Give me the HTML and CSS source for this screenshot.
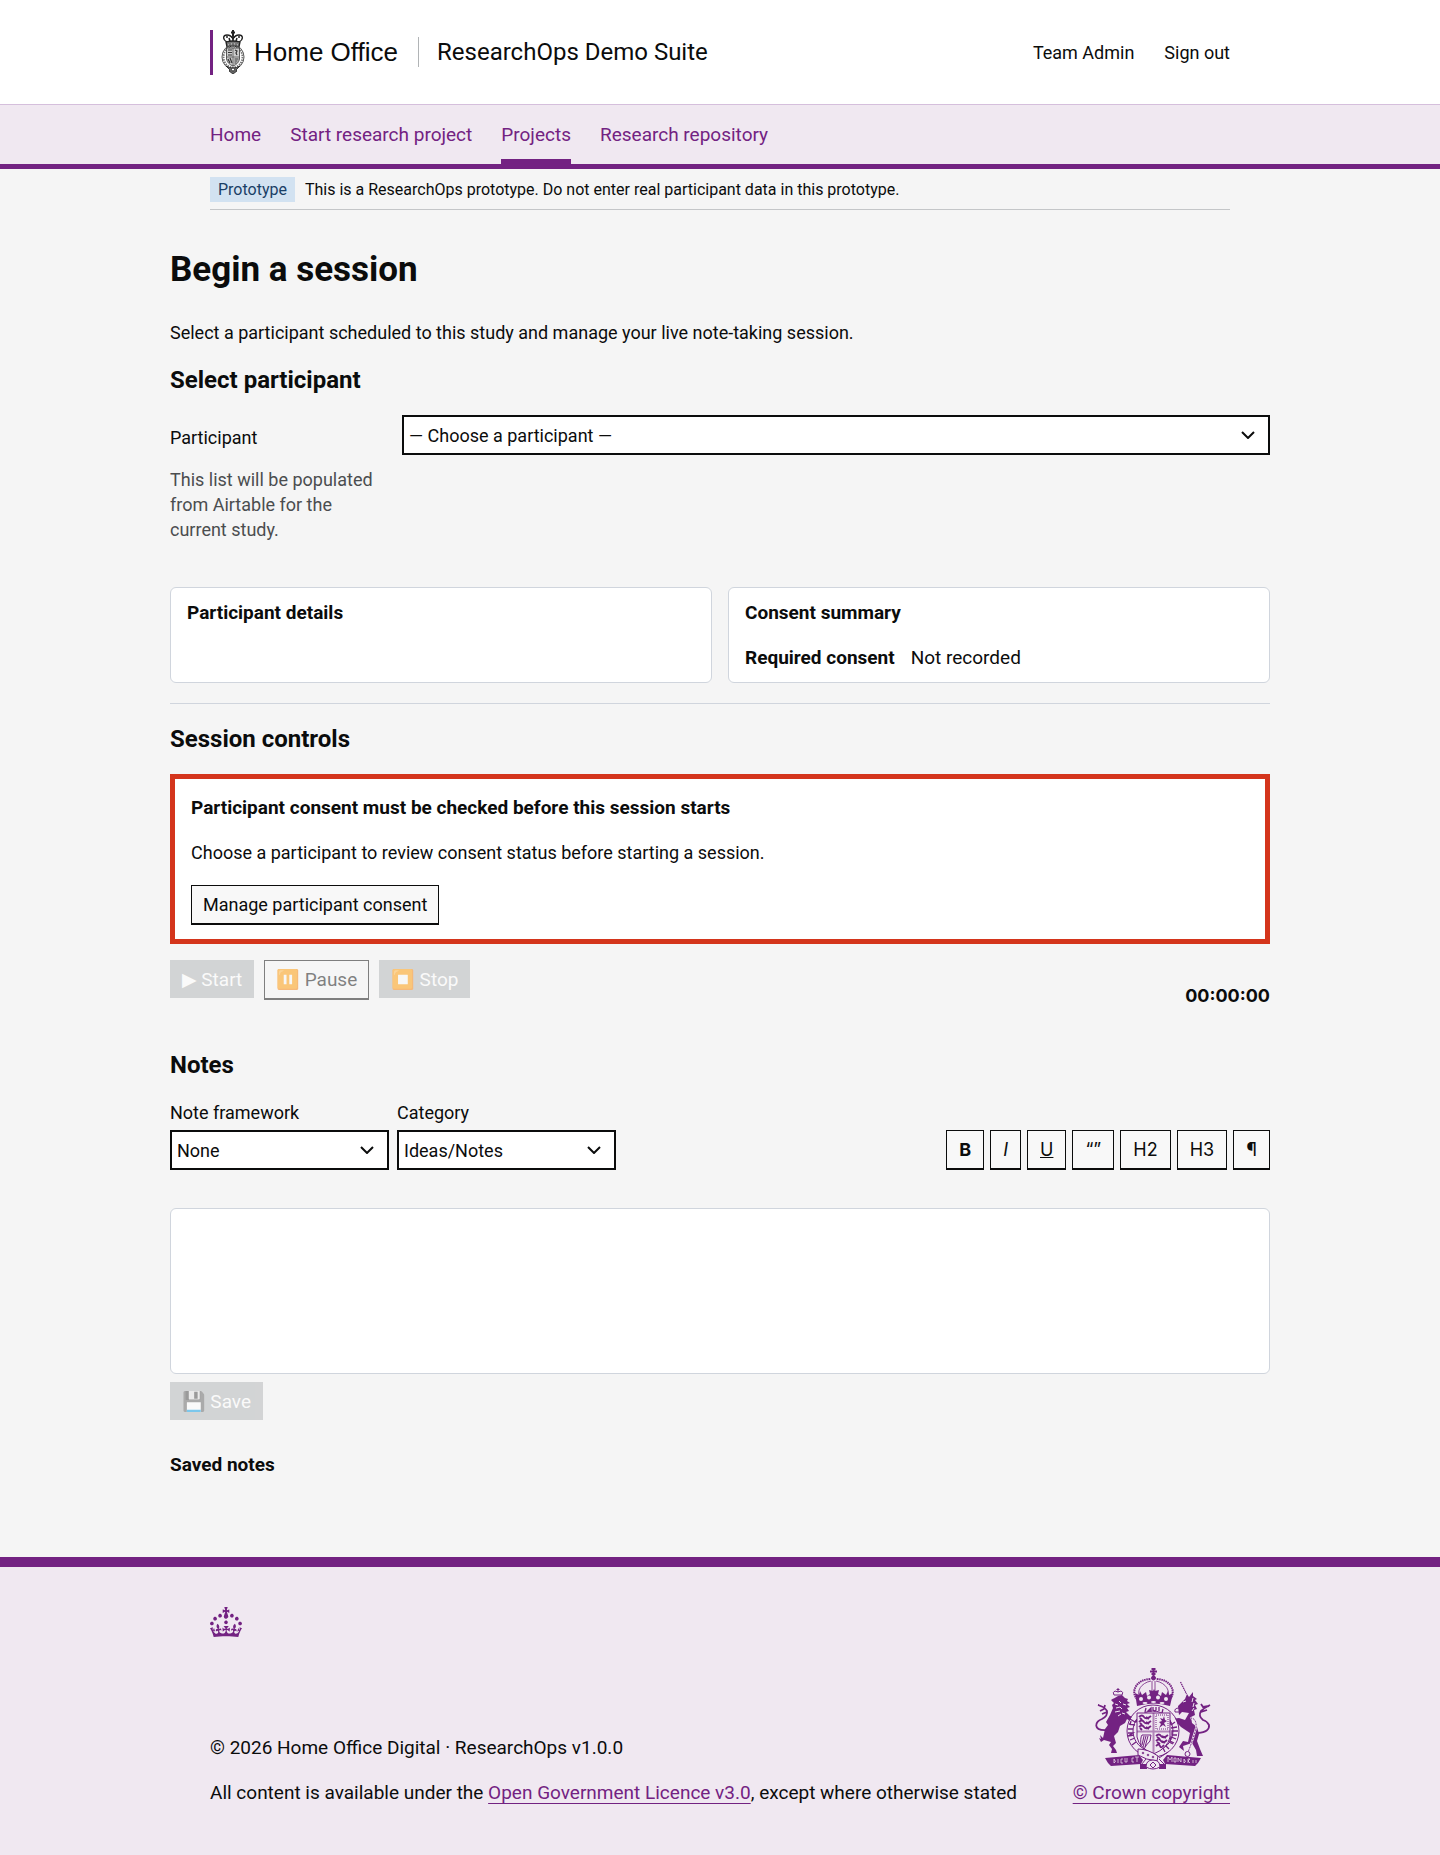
FILE: index.html
```html
<!DOCTYPE html>
<html lang="en">
<head>
<meta charset="utf-8">
<meta name="viewport" content="width=device-width, initial-scale=1">
<title>Begin a session</title>
<link rel="stylesheet" href="styles.css">
</head>
<body>
<header class="header">
  <div class="width header__row">
    <a class="brand" href="#">
      <span class="brand__bar"></span>
      <svg class="brand__crest" viewBox="0 0 24 44" aria-hidden="true" fill="none" stroke="#222" stroke-width=".8">
        <path d="M12 0v6M10 2.500h4" stroke-width="2"/>
        <path d="M6 12C1 9 2 5 6 5c3 0 5 2 6 4 1-2 3-4 6-4 4 0 5 4 0 7" stroke-width="1.300"/>
        <path d="M5 7h2M10 7h4M17 7h2M12 6v6M8 8l1 3M16 8l-1 3" stroke-width="1.500"/>
        <path d="M5 12q7-2 14 0l-1 5q-6-2-12 0z" fill="#777" stroke-width="1.300"/>
        <path d="M7 15h1M10 14h1M13 14h1M16 15h1" stroke="#fff"/>
        <ellipse cx="12" cy="27" rx="11" ry="12" stroke="#555" stroke-width="1"/>
        <ellipse cx="12" cy="27" rx="9.500" ry="10.500" stroke="#777" stroke-width="2" stroke-dasharray="1.500 1"/>
        <path d="M5.500 18h13v11q-1 5-6.500 7-5.500-2-6.500-7z" fill="#ccc" stroke="#333"/>
        <path d="M12 18v18M6 27h12" stroke="#555"/>
        <path d="M7 20h4M7 22.500h4M7 25h4M14 20l2 1-1 2 1 2M7 29l2 4M9 28l2 5M13.500 29h4M13.500 31h3M13.500 33h2" stroke="#333" stroke-width="1.200"/>
        <path d="M5 36q7 4 14 0l-4 4 1 1-4 3-4-3 1-1z" fill="#666"/>
        <circle cx="12" cy="39.500" r="1.500" fill="#fff"/>
      </svg>
      <span class="brand__name">Home Office</span>
      <span class="brand__service">ResearchOps Demo Suite</span>
    </a>
    <nav class="account" aria-label="Account">
      <a href="#">Team Admin</a>
      <a href="#">Sign out</a>
    </nav>
  </div>
</header>
<nav class="nav" aria-label="Main">
  <div class="width nav__row">
    <a href="#">Home</a>
    <a href="#">Start research project</a>
    <a href="#" class="is-active" aria-current="page">Projects</a>
    <a href="#">Research repository</a>
  </div>
</nav>
<div class="width">
  <div class="phase"><strong class="phase__tag">Prototype</strong><span>This is a ResearchOps prototype. Do not enter real participant data in this prototype.</span></div>
</div>
<main class="main">
  <h1>Begin a session</h1>
  <p class="intro">Select a participant scheduled to this study and manage your live note-taking session.</p>
  <section>
    <h2>Select participant</h2>
    <div class="picker">
      <div class="picker__text">
        <label for="participant">Participant</label>
        <p class="hint" id="participant-hint">This list will be populated from Airtable for the current study.</p>
      </div>
      <div class="select">
        <select id="participant" aria-describedby="participant-hint"><option>— Choose a participant —</option></select>
        <svg viewBox="0 0 14 8" aria-hidden="true"><path d="M1 1l6 6 6-6" fill="none" stroke="currentColor" stroke-width="2"/></svg>
      </div>
    </div>
    <div class="cards">
      <article class="card"><h3>Participant details</h3></article>
      <article class="card"><h3>Consent summary</h3>
        <dl class="summary"><dt>Required consent</dt><dd>Not recorded</dd></dl>
      </article>
    </div>
  </section>
  <hr>
  <section>
    <h2>Session controls</h2>
    <div class="alert">
      <h3>Participant consent must be checked before this session starts</h3>
      <p>Choose a participant to review consent status before starting a session.</p>
      <button class="btn" type="button">Manage participant consent</button>
    </div>
    <div class="controls">
      <button class="btn btn--solid" type="button" disabled><span class="glyph">▶&#xFE0E;</span> Start</button>
      <button class="btn" type="button" disabled>⏸️ Pause</button>
      <button class="btn btn--solid" type="button" disabled>⏹️ Stop</button>
      <output class="timer">00:00:00</output>
    </div>
  </section>
  <section>
    <h2>Notes</h2>
    <div class="toolbar">
      <div class="field">
        <label for="framework">Note framework</label>
        <div class="select">
          <select id="framework"><option>None</option></select>
          <svg viewBox="0 0 14 8" aria-hidden="true"><path d="M1 1l6 6 6-6" fill="none" stroke="currentColor" stroke-width="2"/></svg>
        </div>
      </div>
      <div class="field">
        <label for="category">Category</label>
        <div class="select">
          <select id="category"><option>Ideas/Notes</option></select>
          <svg viewBox="0 0 14 8" aria-hidden="true"><path d="M1 1l6 6 6-6" fill="none" stroke="currentColor" stroke-width="2"/></svg>
        </div>
      </div>
      <div class="format">
        <button class="btn" type="button"><b>B</b></button>
        <button class="btn" type="button"><i>I</i></button>
        <button class="btn" type="button"><u>U</u></button>
        <button class="btn" type="button">“”</button>
        <button class="btn" type="button">H2</button>
        <button class="btn" type="button">H3</button>
        <button class="btn" type="button">¶</button>
      </div>
    </div>
    <textarea class="editor" aria-label="Note"></textarea>
    <button class="btn btn--solid btn--save" type="button" disabled>💾 Save</button>
    <h3 class="saved">Saved notes</h3>
  </section>
</main>
<footer class="footer">
  <div class="width">
    <svg class="footer__crown" viewBox="0 0 32 30" aria-hidden="true" fill="currentColor"><path d="M22.6 10.4c-1 .4-2-.1-2.4-1-.4-.9.1-2 1-2.4.9-.4 2 .1 2.4 1s-.1 2-1 2.4m-5.9 6.7c-.9.4-2-.1-2.4-1-.4-.9.1-2 1-2.4.9-.4 2 .1 2.4 1s-.1 2-1 2.4m10.8-3.7c-1 .4-2-.1-2.4-1-.4-.9.1-2 1-2.4.9-.4 2 .1 2.4 1s0 2-1 2.4m3.3 4.8c-1 .4-2-.1-2.4-1-.4-.9.1-2 1-2.4.9-.4 2 .1 2.4 1s-.1 2-1 2.4M17 4.7l2.3 1.2V2.5l-2.3.7-.2-.2.9-3h-3.4l.9 3-.2.2c-.1.1-2.3-.7-2.3-.7v3.4L15 4.7c.1.1.1.2.2.2l-1.3 4c-.1.2-.1.4-.1.6 0 1.1.8 2 1.9 2.2h.7c1-.2 1.9-1.1 1.9-2.1 0-.2 0-.4-.1-.6l-1.3-4c-.1-.2 0-.2.1-.3m-7.600 5.700c.9.4 2-.1 2.400-1 .4-.9-.1-2-1-2.400-.9-.4-2 .1-2.400 1s0 2 1 2.400m-5 3c.9.4 2-.1 2.400-1 .4-.9-.1-2-1-2.400-.9-.4-2 .1-2.400 1s.1 2 1 2.400m-3.200 4.800c.9.4 2-.1 2.400-1 .4-.9-.1-2-1-2.400-.9-.4-2 .1-2.400 1s0 2 1 2.400m14.800 11c4.400 0 8.600.3 12.300.8 1.100-4.500 2.400-7 3.700-8.800l-2.500-.9c.2 1.300.3 1.900 0 2.700-.4-.4-.8-1.100-1.100-2.300l-1.200 4c.7-.5 1.300-.8 2-.9-1.100 2.500-2.600 3.100-3.500 3-1.100-.2-1.700-1.200-1.500-2.100.3-1.200 1.500-1.500 2.100-.1 1.100-2.300-.8-3-2-2.300 1.900-1.900 2.100-3.500.6-5.600-2.100 1.600-2.100 3.200-1.200 5.500-1.200-1.400-3.200-.6-2.500 1.600.9-1.400 2.100-.5 1.900.8-.2 1.100-1.700 2.100-3.500 1.900-2.700-.2-2.900-2.100-2.900-3.600.7-.1 1.900.5 2.900 1.900l.4-4.300c-1.100 1.100-2.100 1.400-3.200 1.400.4-1.200 2.100-3 2.100-3h-5.400s1.700 1.900 2.100 3c-1.100 0-2.100-.2-3.200-1.400l.4 4.300c1-1.400 2.200-2 2.900-1.900-.1 1.500-.2 3.400-2.900 3.600-1.900.2-3.400-.8-3.500-1.900-.2-1.300 1-2.200 1.900-.8.7-2.300-1.200-3-2.500-1.600.9-2.200.9-3.900-1.200-5.500-1.500 2-1.300 3.700.6 5.600-1.200-.7-3.100 0-2 2.300.6-1.400 1.800-1.100 2.100.1.2.9-.3 1.900-1.500 2.100-.9.2-2.400-.5-3.500-3 .6 0 1.200.3 2 .9l-1.200-4c-.3 1.100-.7 1.900-1.100 2.300-.3-.8-.2-1.400 0-2.700l-2.900.9C1.300 23 2.600 25.500 3.700 30c3.700-.5 7.900-.8 12.300-.8"/></svg>
    <div class="footer__row">
      <div class="footer__text">
        <p>© 2026 Home Office Digital · ResearchOps v1.0.0</p>
        <p>All content is available under the <a href="#">Open Government Licence v3.0</a>, except where otherwise stated</p>
      </div>
      <a class="copyright" href="#">
        <svg class="arms" viewBox="0 0 118 102" aria-hidden="true" fill="none" stroke="currentColor" stroke-width="1">
          <!-- crown -->
          <path d="M58.500 0v9M55 3.500h7M56.500 1h4M56.500 6h4" stroke-width="2"/>
          <circle cx="58.500" cy="10" r="2" fill="currentColor"/>
          <path d="M42 31C35 23 42 11 56 11M75 31C82 23 75 11 61 11" stroke-width="2" stroke-dasharray="1.500 .7"/>
          <path d="M45 30C41 23 46 15 56 13M72 30C76 23 71 15 61 13M57 13v14M60 13v14" stroke-width=".8"/>
          <path d="M40 25l4 2 1-4 2 4 4-3 1 4 3-2-1-4 4 1 1-2 1 2 4-1-1 4 3 2 1-4 4 3 2-4 1 4 4-2-3 13q-16-5-33 0z" fill="currentColor" stroke="none"/>
          <g fill="#f0e8f1" stroke="none"><circle cx="46" cy="31" r="2"/><circle cx="54" cy="29.500" r="2"/><circle cx="63" cy="29.500" r="2"/><circle cx="71" cy="31" r="2"/><ellipse cx="50" cy="35" rx="2.500" ry="1"/><ellipse cx="58.500" cy="34" rx="2.500" ry="1"/><ellipse cx="67" cy="35" rx="2.500" ry="1"/></g>
          <!-- lion -->
          <path d="M19 27q-2-3 1-4l3 1 3-1q3 1 1 4zM23 20v4M21.500 21.500h3"/>
          <path d="M18 31l5-3 4-1 3 3 3 1-1 2 3 2-3 1 3 3-3 1 2 3-3 1 4 4 5 1 4 5-6 1-6-4-2 4-5 3-2 6-4 4 2 7-3 3 3 4 1 3h-6l1-4-3-4 2-3-7-2-3 2-2-4 2 1-1-4 3 3 2-9 3-4-2-3 4-7 3-7-1-3 2-2-3-3 3-2z" fill="currentColor" stroke="none"/>
          <path d="M20 36l3 1M21 40l4-1 2 2M20 44l5-1M23 48l3-2M24 33l2 2M28 36l3 1M27 45l3 1" stroke="#f0e8f1"/>
          <path d="M12 62C-3 63 0 53 7 51q6-3 5-8-2-4-9-6M3 37l5 2M5 43l4-2 1-4M12 44l-5 2" stroke-width="1.800"/>
          <!-- unicorn -->
          <path d="M85.500 14l6 12" stroke-dasharray="1.500 .6" stroke-width="1.200"/>
          <path d="M83 38l7-7 2-5 2 3 4-5v4l4 3-2 1 3 4-3 1 2 4-3 1 1 5-4 2 1 6 5 4 2 7-2 7 3 8 3 7h-6l-1-6-4-7-9 3 1 5-5-4 4-6 5 1 2-9-9-6-4-4-5-1-1 3-3-2 3-4 8-1 6 2 4-7-7-1-3 3z" fill="currentColor" stroke="none"/>
          <path d="M88 34l3-1M98 30l-1 4M99 35l-1 4M97 43l2-3" stroke="#f0e8f1"/>
          <path d="M84 40q-5 0-4 4h5" />
          <path d="M95 50q7 0 6 10-3 12-8 24" stroke="#f0e8f1" stroke-width="2"/>
          <path d="M95 50q7 0 6 10-3 12-8 24" stroke-dasharray="2 1"/>
          <circle cx="92.500" cy="86" r="2.500"/>
          <path d="M103 65q12-1 11-8-2-4-6-5-5-4-2-9 3-3 9-6M114 38l-6 1-2-3M106 44l6-2" stroke-width="1.800"/>
          <!-- garter and shield -->
          <circle cx="58" cy="63" r="23" stroke="#f0e8f1" stroke-width="5"/>
          <circle cx="58" cy="63" r="26"/><circle cx="58" cy="63" r="20"/>
          <path d="M50 44l1-4M53 43l3-3v3zM58 39v3q2 2 3 0v-3M64 39v4M68 41l-1 4M35 51l5 3M34 56l6 1M36 53l-1 4M33 61l5 0M33 65h5l-5 3 6-1M35 72l5-2M37 77l4-3M80 54l-4 3M82 59l-6 1M83 63h-6v4h5M81 71l-5-2-1 4 4 2M78 76l-4-2M74 81l-4-4M70 84l-2-4" stroke-width="1.300"/>
          <path d="M42 45h33v24q-2 11-16.500 17Q44 80 42 69z" fill="#f0e8f1"/>
          <path d="M42 63.500h33M58.500 45v41" stroke-width="2" opacity=".5"/>
          <path d="M44 49q3-3 5 0t7-1M44 54q3-3 5 0t7-1M44 59q3-3 5 0t7-1M61 68q3-3 5 0t7-1M61 73q3-3 5 0t6-1M61 78q3-3 4 0t4-1M45 50l2 2M51 49l3 2M45 55l2 2M51 54l3 2M45 60l2 2M51 59l3 2M62 69l3 2M67 68l4 2M62 74l3 2M67 73l3 2" stroke-width="1.800"/>
          <path d="M61 47h12v14H61z" stroke-dasharray="1 1"/>
          <path d="M64 60l2-4-2-2 3-1-2-3 3 1 1-3 1 4 2 1-3 2 2 4-3-2z" fill="currentColor" stroke="none"/>
          <path d="M46 78q-1-8 1-11h9l-1 6q-4 4-6 8M49 68l-2 9M51 68l-3 11M53 68l-3 11"/>
          <!-- motto -->
          <path d="M10 90l34-3 4 5-2 4-30 2-3-3zM106 90l-34-3-4 5 2 4 30 2 3-3z" fill="currentColor" stroke="none"/>
          <path d="M19 91v4q3-1 0-4M23 91v4M26 91v4h2M26 91h2M30 90v4h2v-4M37 90v4h2M37 90h2M42 89v5M40 89h4M73 94v-5l2 3 2-3v5M79 90v4h2v-4zM83 94v-4l3 4v-4M89 91v4q3-1 0-4M93 95v-4h2l-2 2 2 2M98 92v3M101 92v3" stroke="#f0e8f1" stroke-width=".7"/>
          <path d="M43 81q10 0 20 7l-1 5q-11-1-19-6z" fill="#f0e8f1"/>
          <path d="M73 84l-9 6M46 97l5-6M70 97l-6-6"/>
          <path d="M45 96h7v5h-7zM64 96h7v5h-7z" fill="currentColor" stroke="none"/>
          <path d="M51 99q0-7 7-7t7 7q-7 4-14 0M55 97l3-3 3 3-3 3z" fill="#f0e8f1"/>
          <circle cx="48" cy="85" r=".8"/><circle cx="53" cy="87" r=".8"/><circle cx="58" cy="89" r=".8"/>
        </svg>
        <span>© Crown copyright</span>
      </a>
    </div>
  </div>
</footer>
</body>
</html>
```
FILE: styles.css
```css
* { box-sizing: border-box; }
body {
  margin: 0;
  background: #f5f5f5;
  color: #0b0c0c;
  font: 18px/25px Roboto, "Noto Color Emoji", sans-serif;
}
h1, h2, h3, p, dl, dd { margin: 0; }
h1 { font-size: 35px; line-height: 40px; }
h2 { font-size: 24px; line-height: 30px; margin-bottom: 20px; }
h3 { font-size: 19px; line-height: 25px; }
a { color: #732282; text-decoration-thickness: 1px; text-underline-offset: 4px; }
button, select, textarea { font: inherit; color: inherit; border-radius: 0; margin: 0; }

.width { max-width: 1080px; margin: 0 auto; padding: 0 30px; }

.header { background: #fff; }
.header__row { display: flex; align-items: center; justify-content: space-between; min-height: 104px; }
.brand { display: flex; align-items: center; color: #0b0c0c; text-decoration: none; }
.brand__bar { width: 3px; height: 45px; background: #732282; margin-right: 8px; }
.brand__crest { width: 24px; height: 44px; margin-right: 9px; }
.brand__name { font: 26px/30px "Liberation Sans", Arial, sans-serif; padding-right: 20px; border-right: 1px solid #b1b4b6; }
.brand__service { font-size: 24px; line-height: 30px; padding-left: 18px; }
.account { display: flex; gap: 30px; }
.account a { color: #0b0c0c; text-decoration: none; }

.nav { background: #f0e8f1; border-top: 1px solid #d5bfdc; border-bottom: 5px solid #732282; font-size: 19px; }
.nav__row { display: flex; gap: 29px; }
.nav a { padding: 17px 0 12px; border-bottom: 5px solid transparent; text-decoration: none; }
.nav a.is-active { border-color: #732282; }

.phase { display: flex; align-items: center; gap: 10px; padding: 8px 0 7px; border-bottom: 1px solid #c4c6c8; font-size: 16px; }
.phase__tag { font-weight: 400; padding: 0 8px; background: #d2e2f1; color: #1a3f66; }

.main { max-width: 1100px; margin: 0 auto; padding: 40px 0 80px; }
.intro { margin: 30px 0 20px; }

.select { display: grid; align-items: center; }
.select select, .select svg { grid-area: 1 / 1; }
.select select { appearance: none; height: 40px; width: 100%; padding: 5px; border: 2px solid #0b0c0c; background: #fff; }
.select svg { width: 14px; height: 8px; margin-right: 15px; justify-self: end; pointer-events: none; }
.picker { display: grid; grid-template-columns: 208px 1fr; align-items: start; gap: 24px; margin-bottom: 45px; }
.picker__text { padding-top: 10px; }
.hint { margin-top: 17px; color: #4b4d4f; }

.cards { display: grid; grid-template-columns: 1fr 1fr; gap: 16px; }
.card { min-height: 96px; padding: 12px 16px; background: #fff; border: 1px solid #d0d5dd; border-radius: 6px; }
.summary { display: flex; gap: 16px; margin-top: 20px; font-size: 19px; }
.summary dt { font-weight: 700; }
hr { margin: 20px 0; border: 0; border-top: 1px solid #d0d5dd; }

.alert { padding: 16px 16px 14px; border: 5px solid #d4351c; background: #fff; }
.alert p { margin: 20px 0; }

.btn { display: block; height: 40px; padding: 0 11px; border: 1px solid #0b0c0c; border-bottom-width: 2px; background: #f8f8f8; white-space: nowrap; }
.btn:disabled { opacity: .5; }
.btn--solid { height: 38px; padding: 0 12px; border: 0; background: #b1b4b6; color: #fff; }
.btn--save { font-size: 19px; }
.glyph { font-family: "DejaVu Sans", sans-serif; }

.controls { display: flex; align-items: flex-start; gap: 10px; min-height: 48px; margin: 16px 0 42px; font-size: 19px; }
.timer { margin-left: auto; align-self: flex-end; font-family: Inter, sans-serif; font-size: 18px; font-weight: 700; }

.toolbar { display: flex; align-items: flex-end; gap: 8px; margin-bottom: 38px; }
.field { display: flex; flex-direction: column; gap: 5px; flex: 0 1 219px; }
.format { display: flex; gap: 6px; margin-left: auto; font-family: Inter, sans-serif; }
.format .btn { padding: 0 12px; }

.editor { display: block; width: 100%; height: 166px; margin-bottom: 8px; padding: 12px; border: 1px solid #d0d5dd; border-radius: 6px; background: #fff; resize: none; }
.saved { margin-top: 32px; }

.footer { padding: 40px 0 50px; border-top: 10px solid #732282; background: #f0e8f1; font-size: 19px; }
.footer__crown { display: block; width: 32px; height: 30px; color: #732282; }
.footer__row { display: flex; justify-content: space-between; align-items: flex-end; margin-top: 31px; }
.footer__text { display: grid; gap: 20px; }
.copyright { display: flex; flex-direction: column; align-items: flex-end; gap: 10px; }
.arms { width: 118px; height: 102px; margin-right: 17px; }
```
